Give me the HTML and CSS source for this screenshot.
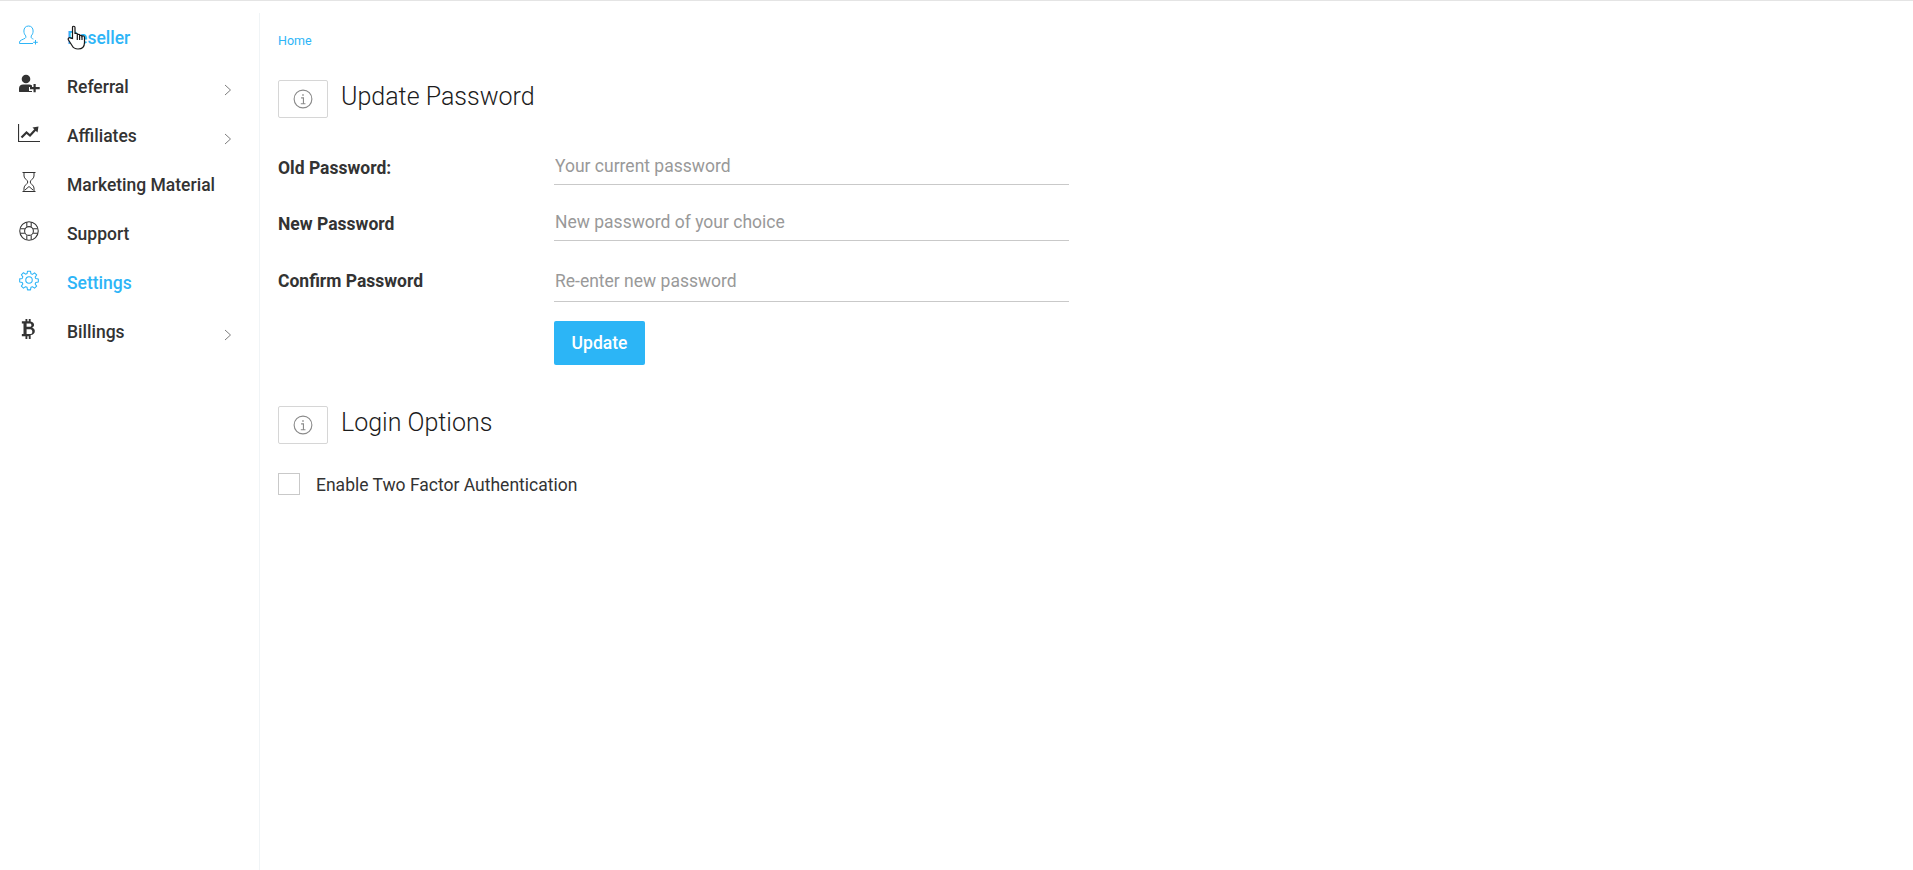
FILE: index.html
```html
<!DOCTYPE html>
<html lang="en">
<head>
  <meta charset="UTF-8">
  <meta name="viewport" content="width=device-width, initial-scale=1">
  <title>Settings</title>
  <link rel="stylesheet" href="styles.css">
</head>
<body>
  <div class="layout">

    <!-- Sidebar -->
    <nav class="sidebar">
      <a class="nav-item active" href="#reseller">
        <svg class="nav-icon" viewBox="0 0 22 22"><path d="M10.500 2c-3 0-4.600 2.200-4.600 5 0 2 .7 3.700 1.900 4.900v1.600c0 1-4.300 2-5.800 3.500-.4.500-.5 1.500-.5 2.500h13.500M10.500 2c3 0 4.600 2.200 4.600 5 0 2-.7 3.700-1.900 4.900v1.600c0 .6 1 1.100 2.200 1.600M17.500 16v4.500M15.200 18.300h4.600"/></svg>
        <span class="nav-label">Reseller</span>
      </a>
      <a class="nav-item" href="#referral">
        <svg class="nav-icon solid" viewBox="0 0 22 22"><circle cx="8" cy="6" r="4.300"/><path d="M1 19v-3.500c0-2.500 1.800-4 4-4h6c1.200 0 2.200.4 3 1.100v1.400h-3v4h3v1H1.500c-.3 0-.5-.2-.5-.5z"/><path d="M15.500 11h2.200v3h4v2.200h-4v3h-2.200v-3h-3.500V14h3.500z"/></svg>
        <span class="nav-label">Referral</span>
        <svg class="chevron" viewBox="0 0 8 12"><path d="M1 1l5.500 5L1 11"/></svg>
      </a>
      <a class="nav-item" href="#affiliates">
        <svg class="nav-icon" viewBox="0 0 22 22"><path d="M.5 2v17.500h21.500" stroke-width="1.200"/><path class="thick" d="M3.500 15.500l5-5 3.500 3 6-6.500"/><path class="solid-tip" d="M14.500 5.500l6-1-1 6z"/></svg>
        <span class="nav-label">Affiliates</span>
        <svg class="chevron" viewBox="0 0 8 12"><path d="M1 1l5.500 5L1 11"/></svg>
      </a>
      <a class="nav-item" href="#marketing">
        <svg class="nav-icon" viewBox="0 0 22 22"><path d="M4.500 1.500h13M4.500 20.500h13M6 1.500v3.500c0 2.800 3.800 4 3.800 6S6 14.200 6 17v3.500M16 1.500v3.500c0 2.800-3.800 4-3.800 6s3.800 3.200 3.800 6v3.500M7 19l4-3.500 4 3.500"/></svg>
        <span class="nav-label">Marketing Material</span>
      </a>
      <a class="nav-item" href="#support">
        <svg class="nav-icon" viewBox="-1.500 -1.500 25 25"><circle cx="11" cy="11" r="10.500" stroke-width="1.200"/><circle cx="11" cy="11" r="5" stroke-width="1.200"/><path stroke-width="1.200" d="M8.500 1v5.300M13.500 1v5.300M8.500 15.700V21M13.500 15.700V21M1 8.500h5.300M1 13.500h5.300M15.700 8.500H21M15.700 13.500H21"/></svg>
        <span class="nav-label">Support</span>
      </a>
      <a class="nav-item active" href="#settings">
        <svg class="nav-icon" viewBox="-1.500 -1.500 25 25"><circle cx="11" cy="11" r="3.700" stroke-width="1.200"/><path stroke-width="1.200" d="M9.300 1h3.400l.5 2.900 1.700.7 2.400-1.700 2.400 2.400-1.700 2.400.7 1.700 2.900.5v3.400l-2.900.5-.7 1.700 1.700 2.400-2.400 2.400-2.400-1.700-1.700.7-.5 2.900H9.300l-.5-2.900-1.700-.7-2.400 1.700-2.400-2.400 1.700-2.400-.7-1.700-2.900-.5V9.700l2.900-.5.7-1.700-1.700-2.400 2.400-2.400 2.400 1.700 1.700-.7z" stroke-linejoin="round"/></svg>
        <span class="nav-label">Settings</span>
      </a>
      <a class="nav-item" href="#billings">
        <svg class="nav-icon solid" viewBox="1 1 20 20"><path fill-rule="evenodd" d="M7.800 2h1.700v2h1.300V2h1.700v2.100c2 .3 3.100 1.400 3.100 3.100 0 1.200-.6 2.100-1.700 2.600 1.500.4 2.400 1.500 2.400 3 0 2.200-1.500 3.500-3.800 3.700V20h-1.700v-2.400H9.500V20H7.800v-2.400H4.500v-2h1.500V6H4.500V4h3.300zM8.800 6v3h2.900c.9 0 1.500-.6 1.500-1.500S12.600 6 11.700 6zM8.800 11.200v4.400h3.500c1 0 1.700-.9 1.700-2.200s-.7-2.200-1.700-2.200z"/></svg>
        <span class="nav-label">Billings</span>
        <svg class="chevron" viewBox="0 0 8 12"><path d="M1 1l5.500 5L1 11"/></svg>
      </a>
    </nav>

    <!-- Main content -->
    <main class="content">
      <a class="breadcrumb" href="#home">Home</a>

      <section class="panel">
        <div class="panel-head">
          <span class="info-box">
            <svg viewBox="0 0 18 18"><circle cx="9" cy="9" r="8"/><path d="M9 4.600v1.600M7.300 8h2.100v5.200M7 13.300h4.200"/></svg>
          </span>
          <h2>Update Password</h2>
        </div>
        <form class="password-form">
          <div class="form-row">
            <label for="old-password">Old Password:</label>
            <input type="password" id="old-password" placeholder="Your current password">
          </div>
          <div class="form-row">
            <label for="new-password">New Password</label>
            <input type="password" id="new-password" placeholder="New password of your choice">
          </div>
          <div class="form-row last">
            <label for="confirm-password">Confirm Password</label>
            <input type="password" id="confirm-password" placeholder="Re-enter new password">
          </div>
          <button type="button" class="btn-update">Update</button>
        </form>
      </section>

      <section class="panel login-options">
        <div class="panel-head">
          <span class="info-box">
            <svg viewBox="0 0 18 18"><circle cx="9" cy="9" r="8"/><path d="M9 4.600v1.600M7.300 8h2.100v5.200M7 13.300h4.200"/></svg>
          </span>
          <h2>Login Options</h2>
        </div>
        <label class="check-row">
          <span class="check-box"></span>
          <span class="check-text">Enable Two Factor Authentication</span>
        </label>
      </section>
    </main>
  </div>

  <!-- Mouse pointer caught in the screenshot -->
  <svg class="pointer" viewBox="0 0 20 26"><path d="M5.500 13.500V2.500c0-1.700 2.500-1.700 2.500 0V9c0-1 2.300-1 2.300 0v1c0-1 2.300-1 2.300 0v1c0-1 2.400-1 2.400 .3 .8-.8 2.500-.3 2.500 1v5.200c0 4-2.500 6.500-6.500 6.500-3.300 0-4.800-1.200-6-3.500L1.500 15c-1-1.800 1-3.200 2.300-1.800z"/><path d="M10.300 10v5M12.600 11v4M15 11.300V15"/></svg>
</body>
</html>
```

FILE: styles.css
```css
/* Global Styles */
* {
  box-sizing: border-box;
}
body {
  font-family: 'Roboto', sans-serif;
  margin: 0;
  padding: 0;
  background: #ffffff;
  color: #333333;
  font-size: 17.5px;
  border-top: 1px solid #e4e4e4;
}
a {
  text-decoration: none;
  color: inherit;
}
.layout {
  display: flex;
  min-height: 869px;
}

/* Sidebar */
.sidebar {
  width: 260px;
  flex: none;
  margin-top: 12px;
  border-right: 1px solid #f0f4f6;
}
.nav-item {
  display: flex;
  align-items: center;
  height: 49px;
  padding-left: 18px;
  font-weight: 500;
}
.nav-item.active {
  color: #2eb5f7;
}
.nav-icon {
  width: 22px;
  height: 22px;
  flex: none;
  margin: -6px 27px 0 0;
  fill: none;
  stroke: currentColor;
  stroke-width: 1;
}
.nav-icon.solid {
  fill: currentColor;
  stroke: none;
}
.nav-icon .thick {
  stroke-width: 2.200;
}
.nav-icon .solid-tip {
  fill: currentColor;
  stroke: none;
}
.nav-label {
  flex: 1;
}
.chevron {
  width: 8px;
  height: 12px;
  flex: none;
  margin: 6px 27px 0 0;
  fill: none;
  stroke: #7d7d7d;
  stroke-width: 1;
}

/* Main content */
.content {
  flex: 1;
  padding: 32px 0 0 18px;
}
.breadcrumb {
  display: block;
  height: 15px;
  font-size: 12.5px;
  line-height: 15px;
  color: #2eb5f7;
}
.panel {
  margin-top: 32px;
}
.panel-head {
  display: flex;
  align-items: center;
  gap: 13px;
  height: 38px;
}
.panel-head h2 {
  margin: -6px 0 0;
  font-size: 25px;
  font-weight: 300;
  color: #1c1c1c;
}
.info-box {
  display: flex;
  align-items: center;
  justify-content: center;
  width: 50px;
  height: 38px;
  padding-bottom: 1px;
  border: 1px solid #d6d6d6;
  border-radius: 2px;
}
.info-box svg {
  width: 20px;
  height: 20px;
  fill: none;
  stroke: #8a8a8a;
  stroke-width: 1;
}

/* Password form */
.password-form {
  width: 791px;
  margin-top: 29px;
}
.form-row {
  display: flex;
  margin-bottom: 18px;
}
.form-row label {
  width: 276px;
  flex: none;
  height: 38px;
  line-height: 42px;
  font-weight: 700;
}
.form-row input {
  flex: 1;
  height: 38px;
  padding: 0 0 0 1px;
  border: none;
  border-bottom: 1px solid #c9c9c9;
  outline: none;
  font-family: inherit;
  font-size: 17.5px;
  color: #333333;
}
.form-row input::placeholder {
  color: #999999;
}
.form-row.last {
  margin: 19px 0 19px;
}
.form-row.last input {
  height: 42px;
}
.form-row.last label {
  line-height: 42px;
}
.btn-update {
  display: block;
  width: 91px;
  height: 44px;
  margin-left: 276px;
  border: none;
  border-radius: 2px;
  background: #2cb5f6;
  color: #ffffff;
  font-family: inherit;
  font-size: 17.5px;
  font-weight: 500;
  cursor: pointer;
}

/* Login options */
.login-options {
  margin-top: 41px;
}
.check-row {
  display: flex;
  align-items: center;
  gap: 16px;
  margin-top: 29px;
  color: #333333;
}
.check-box {
  width: 22px;
  height: 22px;
  border: 1px solid #c9c9c9;
}
.check-text {
  margin-top: 2px;
}

/* Pointer */
.pointer {
  position: absolute;
  left: 67px;
  top: 25px;
  width: 20px;
  height: 26px;
  fill: #ffffff;
  stroke: #1a1a1a;
  stroke-width: 1.200;
}
```
